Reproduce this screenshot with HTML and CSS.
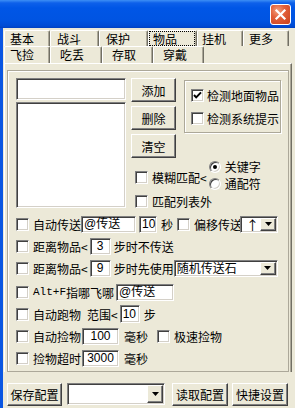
FILE: index.html
```html
<!DOCTYPE html>
<html>
<head>
<meta charset="utf-8">
<link rel="stylesheet" href="styles.css">
</head>
<body>
<div class="window">
  <div class="titlebar">
    <div class="close">
      <svg width="13" height="13" viewBox="0 0 13 13"><path d="M2.5 2.5 L10.5 10.5 M10.5 2.5 L2.5 10.5" stroke="#fff" stroke-width="2.2" stroke-linecap="square"/></svg>
    </div>
  </div>
  <div class="frame">
    <div class="tabs">
      <div class="tabrow row1">
        <div class="tab t1">基本</div>
        <div class="tab t2">战斗</div>
        <div class="tab t2">保护</div>
        <div class="tab t2 focus"><span class="focusbox">物品</span></div>
        <div class="tab t1 p5">挂机</div>
        <div class="tab t1">更多</div>
      </div>
      <div class="tabrow row2">
        <div class="tab sel s1">飞捡</div>
        <div class="tab s2">吃丢</div>
        <div class="tab s3">存取</div>
        <div class="tab s3">穿戴</div>
      </div>
    </div>
    <div class="page">
      <div class="panel">
        <div class="upper">
          <div class="listcol">
            <div class="sunken topedit"></div>
            <div class="sunken listbox"></div>
          </div>
          <div class="rightcol">
            <div class="btnarea">
              <div class="btncol">
                <div class="btn side">添加</div>
                <div class="btn side">删除</div>
                <div class="btn side">清空</div>
              </div>
              <div class="groupbox">
                <div class="chk gbrow"><span class="box"><svg width="11" height="11" viewBox="0 0 11 11"><path d="M2 5 L4.2 7.4 L9 2.4" stroke="#000" stroke-width="2" fill="none"/></svg></span>检测地面物品</div>
                <div class="chk gbrow"><span class="box"></span>检测系统提示</div>
              </div>
            </div>
            <div class="match">
              <div class="chk fuzzy"><span class="box"></span>模糊匹配&lt;</div>
              <div class="radios">
                <div class="radio"><span class="dot"><span class="pip"></span></span>关键字</div>
                <div class="radio"><span class="dot"></span>通配符</div>
              </div>
            </div>
            <div class="chk outside"><span class="box"></span>匹配列表外</div>
          </div>
        </div>
        <div class="rows">
          <div class="row">
            <div class="chk"><span class="box"></span>自动传送</div>
            <div class="sunken edit w55">@传送</div>
            <div class="sunken edit w18 ml3">10</div>
            <span class="ml4">秒</span>
            <div class="chk ml4"><span class="box"></span><span class="clipl">偏移传送</span></div>
            <div class="sunken combo w38"><span class="ctext arrow">↑</span><span class="ddbtn"><svg width="7" height="4" viewBox="0 0 7 4"><path d="M0 0 H7 L3.5 4 Z" fill="#000"/></svg></span></div>
          </div>
          <div class="row">
            <div class="chk"><span class="box"></span>距离物品&lt;</div>
            <div class="sunken edit w21 ml2 center">3</div>
            <span class="ml3">步时不传送</span>
          </div>
          <div class="row">
            <div class="chk"><span class="box"></span>距离物品&lt;</div>
            <div class="sunken edit w21 ml2 center">9</div>
            <span class="ml3">步时先使用</span>
            <div class="sunken combo w104"><span class="ctext">随机传送石</span><span class="ddbtn"><svg width="7" height="4" viewBox="0 0 7 4"><path d="M0 0 H7 L3.5 4 Z" fill="#000"/></svg></span></div>
          </div>
          <div class="row mt2">
            <div class="chk"><span class="box"></span><span class="mono">Alt+F</span>指哪飞哪</div>
            <div class="sunken edit w58 ml2">@传送</div>
          </div>
          <div class="row">
            <div class="chk"><span class="box"></span>自动跑物</div>
            <span class="ml6">范围&lt;</span>
            <div class="sunken edit w20 ml2 tall">10</div>
            <span class="ml4">步</span>
          </div>
          <div class="row">
            <div class="chk"><span class="box"></span>自动捡物</div>
            <div class="sunken edit w37 ml1 center">100</div>
            <span class="ml5">毫秒</span>
            <div class="chk ml9"><span class="box"></span>极速捡物</div>
          </div>
          <div class="row">
            <div class="chk"><span class="box"></span>捡物超时</div>
            <div class="sunken edit w37 ml1 center">3000</div>
            <span class="ml5">毫秒</span>
          </div>
        </div>
      </div>
    </div>
    <div class="bottombar">
      <div class="btn bottom w55">保存配置</div>
      <div class="sunken combo w98 ml5 bcombo"><span class="ctext"></span><span class="ddbtn"><svg width="7" height="4" viewBox="0 0 7 4"><path d="M0 0 H7 L3.5 4 Z" fill="#000"/></svg></span></div>
      <div class="btn bottom w56 ml7">读取配置</div>
      <div class="btn bottom w56 ml4">快捷设置</div>
    </div>
  </div>
</div>
</body>
</html>
```

FILE: styles.css
```css
* { box-sizing: border-box; }
html, body { margin: 0; padding: 0; }
body {
  width: 295px;
  height: 408px;
  overflow: hidden;
  background: #ECE9D8;
  font-family: "Noto Sans CJK SC", sans-serif;
  font-size: 12px;
  color: #000;
}
.window {
  width: 295px;
  height: 408px;
  display: flex;
  flex-direction: column;
  background: #ECE9D8;
}
.titlebar {
  height: 28px;
  flex: none;
  background: linear-gradient(#3d8ff5 0, #0d60ea 3px, #0056e6 8px, #0054e2 20px, #004bd4 26px, #0040c0 28px);
  display: flex;
  justify-content: flex-end;
  align-items: flex-start;
  padding: 4px 4px 0 0;
}
.close {
  width: 21px;
  height: 21px;
  border: 1px solid #fff;
  border-radius: 3px;
  background: radial-gradient(circle at 35% 30%, #f3a07e 0, #e2603a 40%, #c8401a 100%);
  display: flex;
  align-items: center;
  justify-content: center;
}
.frame {
  flex: 1;
  border-left: 3px solid #0a56e2;
  display: flex;
  flex-direction: column;
}
.tabs { padding: 2px 0 0 1px; }
.tabrow { display: flex; }
.row1 { height: 16px; }
.row2 { height: 17px; }
.tab {
  height: 100%;
  border-left: 1px solid #fff;
  border-top: 1px solid #fff;
  border-right: 1px solid #716f64;
  box-shadow: inset -1px 0 #aca899;
  border-radius: 2px 2px 0 0;
  padding-left: 5px;
  line-height: 15px;
  white-space: nowrap;
}
.row2 .tab { line-height: 16px; }
.t1 { width: 46px; }
.t2 { width: 49px; padding-left: 6px; }
.p5 { padding-left: 4px; }
.tab.focus { padding: 0 1px 0 0; }
.focusbox {
  display: block;
  height: 15px;
  border: 1px dotted #000;
  padding-left: 3px;
  line-height: 13px;
}
.s1 { width: 46px; padding-left: 5px; }
.s2 { width: 52px; padding-left: 9px; }
.s3 { width: 51px; padding-left: 9px; }
.page {
  margin: 0 3px 0 1px;
  border-left: 1px solid #fff;
  border-top: 1px solid #fff;
  border-right: 1px solid #716f64;
  box-shadow: inset -1px 0 #aca899;
  padding: 6px 2px 0 2px;
}
.panel {
  height: 302px;
  border: 1px solid #aca899;
  box-shadow: inset 1px 1px #fff;
}
.upper {
  display: flex;
  align-items: flex-start;
  padding: 7px 0 0 8px;
}
.listcol { width: 110px; display: flex; flex-direction: column; }
.sunken {
  background: #fff;
  border: 1px solid;
  border-color: #808080 #fff #fff #808080;
  box-shadow: inset 1px 1px #404040, inset -1px -1px #d4d0c8;
}
.topedit { height: 22px; }
.listbox { height: 106px; margin-top: 2px; }
.rightcol { margin-left: 5px; display: flex; flex-direction: column; }
.btnarea { display: flex; align-items: flex-start; }
.btncol { width: 45px; display: flex; flex-direction: column; gap: 4px; }
.btn {
  background: #ECE9D8;
  border: 1px solid;
  border-color: #fff #404040 #404040 #fff;
  box-shadow: inset -1px -1px #808080;
  display: flex;
  align-items: center;
  justify-content: center;
  white-space: nowrap;
}
.side { height: 24px; }
.groupbox {
  margin: 2px 0 0 8px;
  width: 97px;
  height: 53px;
  border: 1px solid #aca899;
  box-shadow: inset 1px 1px #fff, 1px 1px #fff;
  padding: 6px 0 0 6px;
  display: flex;
  flex-direction: column;
  gap: 7px;
}
.chk { display: flex; align-items: center; white-space: nowrap; height: 16px; }
.box {
  flex: none;
  width: 13px;
  height: 13px;
  margin-right: 4px;
  background: #fff;
  border: 1px solid;
  border-color: #808080 #fff #fff #808080;
  box-shadow: inset 1px 1px #404040, inset -1px -1px #d4d0c8;
  display: flex;
  align-items: center;
  justify-content: center;
}
.gbrow .box { margin-right: 3px; }
.match { display: flex; align-items: center; height: 34px; margin-left: 4px; }
.fuzzy { margin-top: 4px; }
.radios { display: flex; flex-direction: column; margin-left: 2px; }
.radio { display: flex; align-items: center; height: 17px; white-space: nowrap; }
.dot {
  flex: none;
  width: 12px;
  height: 12px;
  margin-right: 4px;
  border-radius: 50%;
  background: #fff;
  border: 1px solid;
  border-color: #808080 #fff #fff #808080;
  box-shadow: inset 1px 1px #404040, inset -1px -1px #d4d0c8;
  display: flex;
  align-items: center;
  justify-content: center;
}
.pip { width: 4px; height: 4px; border-radius: 50%; background: #000; }
.outside { height: 19px; margin-left: 4px; }
.rows { margin-top: 2px; padding-left: 8px; display: flex; flex-direction: column; }
.row { display: flex; align-items: center; height: 22px; white-space: nowrap; }
.mt2 { margin-top: 2px; }
.edit {
  height: 17px;
  font-family: "Liberation Sans", "Noto Sans CJK SC", sans-serif;
  font-size: 12px;
  line-height: 15px;
  padding-left: 2px;
  overflow: hidden;
  white-space: nowrap;
}
.edit.center { text-align: center; padding-left: 0; }
.edit.tall { height: 18px; line-height: 16px; }
.combo {
  height: 17px;
  display: flex;
  align-items: stretch;
  justify-content: space-between;
  padding: 1px 1px 1px 2px;
}
.ctext { line-height: 14px; font-family: "Liberation Sans", "Noto Sans CJK SC", sans-serif; }
.ctext.arrow { font-family: "Noto Sans CJK SC", sans-serif; font-size: 13px; padding-left: 3px; }
.ddbtn {
  width: 16px;
  background: #ECE9D8;
  border: 1px solid;
  border-color: #fff #404040 #404040 #fff;
  box-shadow: inset -1px -1px #808080;
  display: flex;
  align-items: center;
  justify-content: center;
}
.mono { font-family: "Liberation Mono", monospace; font-size: 11px; }
.clipl { margin-right: -2px; }
.w55 { width: 55px; }
.w18 { width: 18px; }
.w20 { width: 20px; }
.w21 { width: 21px; }
.w37 { width: 37px; }
.w38 { width: 38px; }
.w56 { width: 56px; }
.w58 { width: 58px; }
.w98 { width: 98px; }
.w104 { width: 104px; }
.ml1 { margin-left: 1px; }
.ml2 { margin-left: 2px; }
.ml3 { margin-left: 3px; }
.ml4 { margin-left: 4px; }
.ml5 { margin-left: 5px; }
.ml6 { margin-left: 6px; }
.ml7 { margin-left: 7px; }
.ml9 { margin-left: 9px; }
.bottombar { display: flex; align-items: flex-start; padding: 11px 0 0 4px; }
.bottom { height: 23px; }
.bcombo { height: 22px; }
.bcombo .ddbtn { width: 16px; }
```
